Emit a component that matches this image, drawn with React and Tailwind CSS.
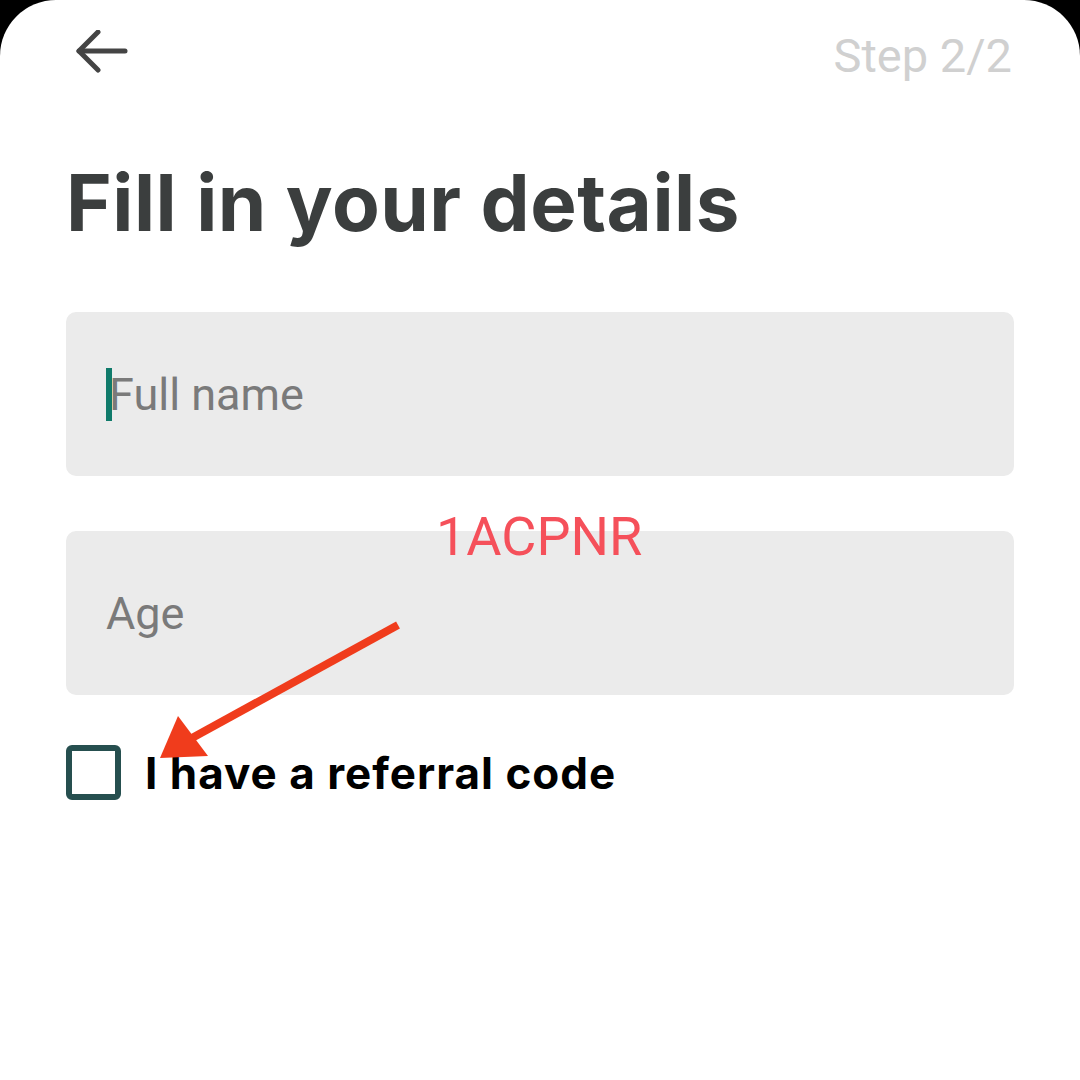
import React from 'react';

const ArrowLeft = () => (
  <svg width="56" height="48" viewBox="0 0 56 48" fill="none" stroke="#444444" strokeWidth="5" strokeLinecap="round" strokeLinejoin="round">
    <path d="M51 21H5" />
    <path d="M24 2L5 21L24 40" />
  </svg>
);

const Field = ({ label, focused }) => (
  <div className="h-[164px] w-full rounded-[10px] bg-[#ebebeb] flex items-center pl-[40px]">
    {focused && <div className="w-[6px] h-[53px] bg-[#0f7a6a] mr-[-3px] shrink-0" />}
    <span
      className="text-[45px] text-[#7a7a7a] leading-none"
      style={{ fontFamily: 'Roboto, sans-serif' }}
    >
      {label}
    </span>
  </div>
);

const App = () => {
  return (
    <div className="w-[1080px] h-[1080px] bg-black overflow-hidden">
      <div className="relative w-full h-full bg-white rounded-t-[56px]">
        {/* Header */}
        <div className="flex justify-between items-start pl-[74px] pr-[68px] pt-[30px]">
          <ArrowLeft />
          <span
            className="text-[47px] text-[#d0d0d0] leading-none mt-[2px]"
            style={{ fontFamily: 'Roboto, sans-serif' }}
          >
            Step 2/2
          </span>
        </div>

        <div className="px-[66px]">
          <h1
            className="mt-[85px] text-[78px] font-bold text-[#3b3e3e] leading-none tracking-[0.5px]"
            style={{ fontFamily: 'Inter, sans-serif' }}
          >
            Fill in your details
          </h1>

          <div className="mt-[70px] flex flex-col gap-[55px]">
            <Field label="Full name" focused />
            <Field label="Age" />
          </div>

          {/* Referral checkbox */}
          <div className="mt-[50px] flex items-center gap-[24px]">
            <div className="w-[55px] h-[55px] rounded-[6px] border-[6px] border-[#264f4f] shrink-0" />
            <span
              className="text-[44px] font-bold text-black leading-none tracking-[1px]"
              style={{ fontFamily: 'Inter, sans-serif' }}
            >
              I have a referral code
            </span>
          </div>
        </div>

        {/* Watermark overlay */}
        <span
          className="absolute left-[436px] top-[510px] text-[54px] text-[#f5505a] leading-none"
          style={{ fontFamily: 'Roboto, sans-serif' }}
        >
          1ACPNR
        </span>

        {/* Annotation arrow */}
        <svg className="absolute left-0 top-0 pointer-events-none" width="1080" height="1080">
          <line x1="398" y1="625" x2="192" y2="738" stroke="#f03c1c" strokeWidth="8" />
          <polygon points="160,758 178,716 208,756" fill="#f03c1c" />
        </svg>
      </div>
    </div>
  );
};

export default App;
